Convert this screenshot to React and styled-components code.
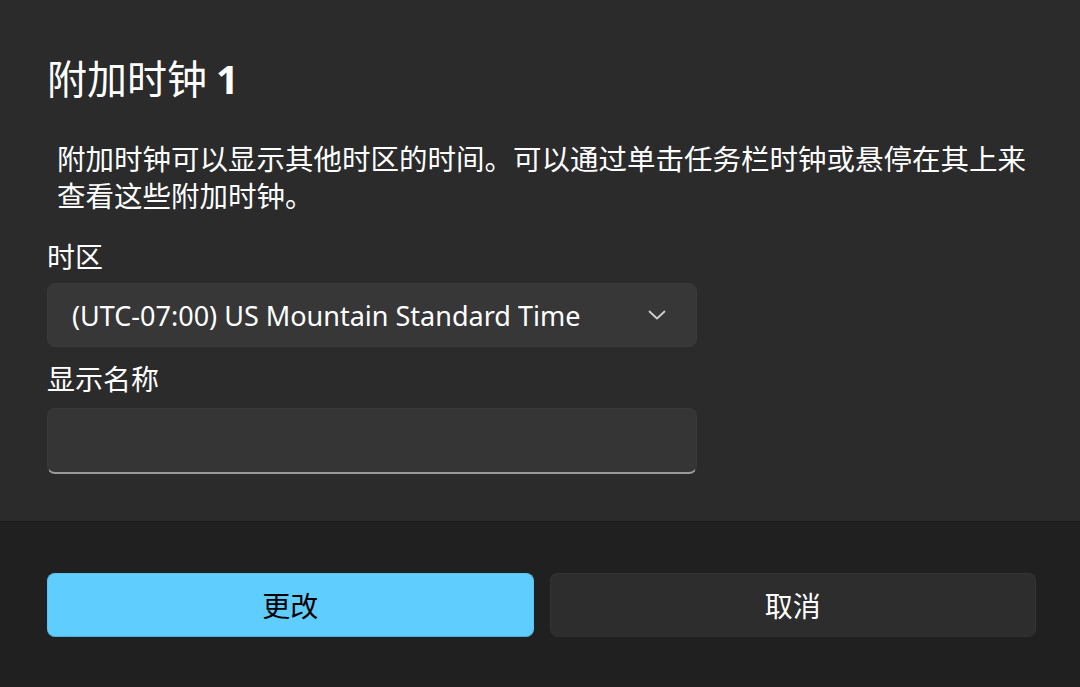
import React from 'react'
import styled, { createGlobalStyle } from 'styled-components'

const GlobalStyle = createGlobalStyle`
  html, body {
    margin: 0;
    padding: 0;
    background: #202020;
  }
  body {
    font-family: "Noto Sans", "Noto Sans CJK SC", sans-serif;
  }
`

const Dialog = styled.div`
  width: 1080px;
  height: 687px;
  display: flex;
  flex-direction: column;
  background: #2b2b2b;
  overflow: hidden;
`

const Body = styled.div`
  flex: 1;
  padding: 50px 0 0 47px;
  display: flex;
  flex-direction: column;
`

const Title = styled.h1`
  margin: 0;
  font-size: 40px;
  line-height: 54px;
  font-weight: 400;
  color: #ffffff;
  font-family: "Noto Sans CJK SC", sans-serif;

  span {
    font-family: "Open Sans", sans-serif;
    font-weight: 700;
  }
`

const Description = styled.p`
  margin: 33px 0 0 10px;
  width: 990px;
  font-size: 28.5px;
  line-height: 37px;
  color: #ffffff;
  font-family: "Noto Sans CJK SC", sans-serif;
`

const Label = styled.div`
  margin-top: ${p => p.top}px;
  font-size: 28px;
  line-height: 38px;
  color: #ffffff;
  font-family: "Noto Sans CJK SC", sans-serif;
`

const Select = styled.div`
  margin-top: 8px;
  width: 650px;
  height: 64px;
  box-sizing: border-box;
  padding: 0 30px 0 24px;
  display: flex;
  align-items: center;
  justify-content: space-between;
  background: #373737;
  border: 1px solid #3a3a3a;
  border-radius: 8px;
  color: #ffffff;
  font-family: "Noto Sans", sans-serif;
  font-size: 27px;
`

const Chevron = () => (
  <svg width="18" height="10" viewBox="0 0 18 10" fill="none">
    <path d="M1.5 1.5 L9 8.5 L16.5 1.5" stroke="#d0d0d0" strokeWidth="1.8" strokeLinecap="round" strokeLinejoin="round" />
  </svg>
)

const Input = styled.div`
  margin-top: 11px;
  width: 650px;
  height: 66px;
  box-sizing: border-box;
  background: #353535;
  border: 1px solid #3a3a3a;
  border-bottom: 2px solid #9a9a9a;
  border-radius: 8px;
`

const Footer = styled.div`
  height: 166px;
  box-sizing: border-box;
  background: #202020;
  border-top: 1px solid #1c1c1c;
  padding: 51px 44px 0 47px;
  display: grid;
  grid-template-columns: 1fr 1fr;
  gap: 16px;
  align-items: start;
`

const Button = styled.button`
  height: 64px;
  border-radius: 8px;
  font-family: "Noto Sans CJK SC", sans-serif;
  font-size: 28px;
  cursor: pointer;
  background: ${p => (p.primary ? '#60cdff' : '#2d2d2d')};
  color: ${p => (p.primary ? '#000000' : '#ffffff')};
  border: 1px solid ${p => (p.primary ? '#5cc3f2' : '#353535')};
  border-bottom-color: ${p => (p.primary ? '#4fb0dc' : '#303030')};
`

export default function App() {
  return (
    <>
      <GlobalStyle />
      <Dialog>
        <Body>
          <Title>附加时钟 <span>1</span></Title>
          <Description>
            附加时钟可以显示其他时区的时间。可以通过单击任务栏时钟或悬停在其上来查看这些附加时钟。
          </Description>
          <Label top={24}>时区</Label>
          <Select>
            <span>(UTC-07:00) US Mountain Standard Time</span>
            <Chevron />
          </Select>
          <Label top={12}>显示名称</Label>
          <Input />
        </Body>
        <Footer>
          <Button primary>更改</Button>
          <Button>取消</Button>
        </Footer>
      </Dialog>
    </>
  )
}
